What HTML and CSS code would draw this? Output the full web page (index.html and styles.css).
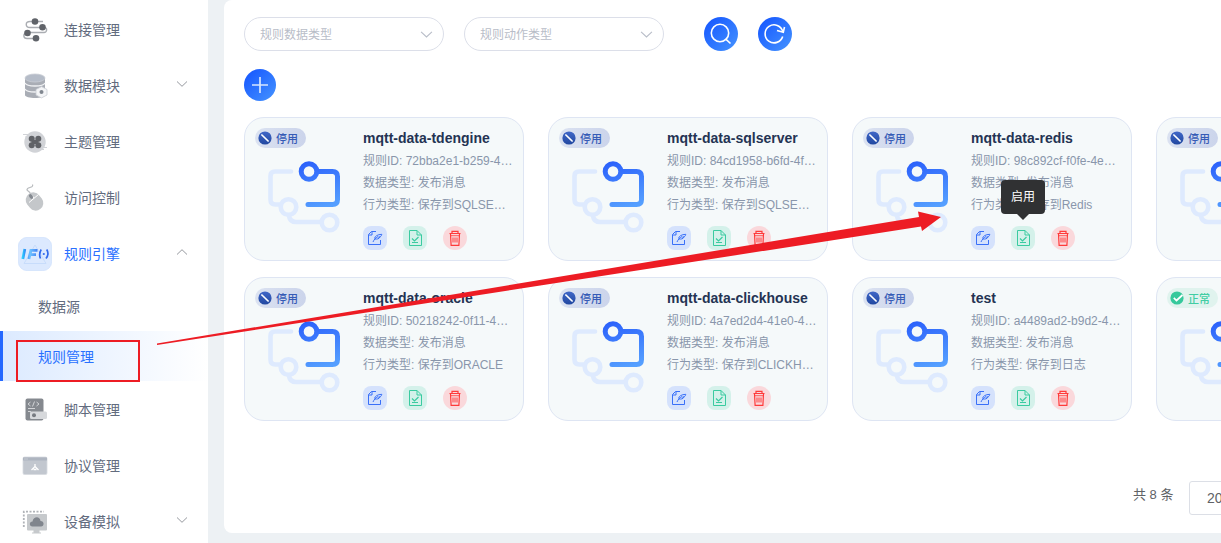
FILE: index.html
```html
<!DOCTYPE html>
<html lang="zh">
<head>
<meta charset="utf-8">
<title>规则管理</title>
<link rel="stylesheet" href="styles.css">
</head>
<body>
<svg class="defs" width="0" height="0" aria-hidden="true">
  <defs>
    <linearGradient id="gflow" gradientUnits="userSpaceOnUse" x1="40" y1="0" x2="55" y2="48"><stop offset="0" stop-color="#2a5ffb"/><stop offset="1" stop-color="#559fff"/></linearGradient>
    <linearGradient id="gnavy" x1="0" y1="0" x2="0" y2="1"><stop offset="0" stop-color="#4067c8"/><stop offset="1" stop-color="#2148a0"/></linearGradient>
    <linearGradient id="gif" gradientUnits="userSpaceOnUse" x1="4" y1="0" x2="20" y2="0"><stop offset="0" stop-color="#2fd8ff"/><stop offset=".25" stop-color="#2f7cf5"/><stop offset=".5" stop-color="#6fc4ff"/><stop offset="1" stop-color="#3d7cf5"/></linearGradient>
  </defs>
  <symbol id="flow" viewBox="0 0 74 74">
    <g fill="none" stroke="#deeafe" stroke-width="4.6" stroke-linecap="round" stroke-linejoin="round">
      <path d="M24 11.500H8Q3.500 11.500 3.500 16V39.500Q3.500 44.500 8.500 44.500H12"/>
      <circle cx="21.500" cy="47" r="7.800"/><path d="M22 56Q23 62 29 62H53"/><circle cx="62.500" cy="62.500" r="7.800"/>
    </g>
    <g fill="none" stroke="url(#gflow)" stroke-width="5" stroke-linecap="round" stroke-linejoin="round">
      <circle cx="42" cy="11.500" r="7.800"/><path d="M51 11.500H65.500Q70.500 11.500 70.500 16.500V39.500Q70.500 44.500 65.500 44.500H41"/>
    </g>
  </symbol>
  <symbol id="stop" viewBox="0 0 14 14"><circle cx="7" cy="7" r="6.600" fill="url(#gnavy)"/><path d="M3.900 4l6.200 6" stroke="#fff" stroke-width="1.700" stroke-linecap="round"/></symbol>
  <symbol id="ok" viewBox="0 0 14 14"><circle cx="7" cy="7" r="6.600" fill="#36c99c"/><path d="M3.800 6.900l2.700 2.600L12.500 4" stroke="#fff" stroke-width="1.700" fill="none"/></symbol>
  <symbol id="edit" viewBox="0 0 24 24"><g fill="none" stroke="#3970f8" stroke-width="1"><path d="M13 5.500H8.500L5.500 8.500V18.500H17.500V14M5.500 9H9V5.500"/><path d="M11.500 12.500C12 10 14.500 8.500 18.800 8.300C18.500 10 17.500 11 15.500 11.200H17C16 13 14 13.200 12 13M10 16C11 13.500 12.500 12 15 10.500"/></g></symbol>
  <symbol id="enable" viewBox="0 0 24 24"><g fill="none" stroke="#3acba0" stroke-width="1"><path d="M14 4.500H6.500V19.500H18.500V9L14 4.500V9H18.500M9 16.500H15"/><path d="M9 12.500l2.500 2.500L15.500 11" stroke-width="1.200"/></g></symbol>
  <symbol id="trash" viewBox="0 0 24 24"><g fill="none" stroke="#ff3a3a" stroke-width="1.200"><path d="M6.500 7.500H17.500M9 7V5.300H15V7M7.500 8L8.100 19.300H15.900L16.500 8"/><path d="M8 9.700H16" stroke-width=".8"/><path d="M10 11.500V16.500M12 11.500V16.500M14 11.500V16.500" stroke-width="1"/></g></symbol>
  <symbol id="chev" viewBox="0 0 12 8"><path d="M1 1.500L6 6.300L11 1.500" fill="none" stroke="currentColor" stroke-width="1"/></symbol>
</svg>

<aside class="sidebar">
  <nav class="menu">
    <a class="item"><svg class="icon" viewBox="0 0 34 34"><g fill="none" stroke="#aaadb2" stroke-width="1.400"><path d="M25 8.500H12C7 8.500 7 14.500 12 14.500H26M26 14.500C30 14.500 29 19.500 26 19.500H10M8 20C5 21 5 25.500 9 25.500H18"/></g><g fill="#606369"><circle cx="17" cy="8.500" r="3.300"/><circle cx="24.500" cy="14.300" r="3.300"/><circle cx="9.500" cy="20" r="3.300"/><circle cx="18" cy="25.200" r="3.300"/></g></svg><span>连接管理</span></a>
    <a class="item"><svg class="icon" viewBox="0 0 34 34"><path d="M7 9V26C7 30 27 30 27 26V9" fill="#a9adb5"/><path d="M7 14C9 18 25 18 27 14M7 20C9 24 25 24 27 20" fill="none" stroke="#f0f1f3" stroke-width="1.300"/><ellipse cx="17" cy="9" rx="10" ry="4" fill="#b5bcc8" stroke="#c9cdd4" stroke-width=".8"/><path d="M23.500 17.600L29 20.500V26L23.500 28.900L18 26V20.500Z" fill="#f4f5f7" stroke="#c9cdd3" stroke-width=".8"/><circle cx="23.500" cy="23" r="2" fill="#80868f"/></svg><span>数据模块</span><svg class="arrow"><use href="#chev"/></svg></a>
    <a class="item"><svg class="icon" viewBox="0 0 34 34"><circle cx="17" cy="17" r="10.700" fill="#d1d3d7"/><path d="M5 9.500H12M7 12H12M22 22.500H29M22 24.500H26" stroke="#d1d3d7" stroke-width="1.200"/><g fill="#606267"><circle cx="13.700" cy="13.700" r="3"/><circle cx="20.300" cy="13.700" r="3"/><circle cx="13.700" cy="20.300" r="3"/><circle cx="20.300" cy="20.300" r="3"/><path d="M13.500 15H20.500V19H13.500Z"/></g></svg><span>主题管理</span></a>
    <a class="item"><svg class="icon" viewBox="0 0 34 34"><path d="M14.500 3.500C16 7.500 8.500 5.500 9 9C9.500 10 12 10.500 12.500 13" fill="none" stroke="#b8bbbe" stroke-width="1.200"/><rect x="9" y="11" width="15" height="19" rx="7.300" fill="#c4c7ca" transform="rotate(-38 16.500 20.500)"/><path d="M11 21.500L20.500 13.500M12.500 13L16 17" stroke="#fff" stroke-width="1"/><ellipse cx="13" cy="15.500" rx="1.700" ry="2.600" fill="#858a91" transform="rotate(-38 13 15.500)"/></svg><span>访问控制</span></a>
    <a class="item current"><svg class="icon" viewBox="0 0 34 34"><rect x=".3" y=".3" width="33.400" height="33.400" rx="9" fill="#dce9fe" stroke="#c9defc" stroke-width=".6"/><path d="M17 8L28 26.500H6Z" fill="none" stroke="#c7dcfb"/><g fill="none" stroke="url(#gif)" stroke-width="2.800"><path d="M6.800 12L4.800 22"/><path d="M19.500 13.400H12.900L10.900 22M11.500 17.600H18"/></g><path d="M23.200 12.500Q20.500 17 22.500 21.500M28.700 12.500Q31.500 17 28 21.500" fill="none" stroke="#326bec" stroke-width="1.700"/><circle cx="25.800" cy="17" r="1.100" fill="#326bec"/></svg><span>规则引擎</span><svg class="arrow up"><use href="#chev"/></svg></a>
    <div class="submenu"><a class="sub">数据源</a><a class="sub selected">规则管理</a></div>
    <a class="item"><svg class="icon" viewBox="0 0 34 34"><rect x="7.500" y="5.500" width="18" height="22" rx="2" fill="#85898f"/><g fill="none" stroke="#d2d4d7" stroke-width="1"><path d="M12.500 9L10 11L12.500 13M18.500 9L21 11L18.500 13M16.500 8.500L14.500 13.500M10 15.500H17M10 18.500H13"/></g><rect x="12" y="18.500" width="17" height="7.500" rx="1.500" fill="#d7d9dc"/><circle cx="16" cy="22.200" r="2" fill="#777b81"/></svg><span>脚本管理</span></a>
    <a class="item"><svg class="icon" viewBox="0 0 34 34"><rect x="5" y="8" width="24" height="17.500" rx="1.500" fill="#c2c7cf" stroke="#d7dae0" stroke-width=".8"/><path d="M5 8.500H29V11.500H5Z" fill="#aeb5c0"/><path d="M6.500 10H10" stroke="#d9dde3" stroke-dasharray="1 1"/><path d="M17 15V17.500L13.500 21M17 17.500L20.500 21M15.500 20.500H18.500" fill="none" stroke="#fff" stroke-width="1.300"/></svg><span>协议管理</span></a>
    <a class="item"><svg class="icon" viewBox="0 0 34 34"><path d="M5.800 22V6.700H26" fill="none" stroke="#b0b3b8" stroke-width="1.800" stroke-dasharray="2 1.500"/><rect x="9" y="9" width="20" height="16.500" rx="1" fill="#c6c9cc"/><path d="M15.500 25H21.500V27.500H23V28.500H14V27.500H15.500Z" fill="#c6c9cc"/><path d="M14.500 21.500C11 21.500 11 16.500 14.500 16.500C15.500 11 22 11 22.500 16C26.500 16 26.500 21.500 23 21.500Z" fill="#80858d"/></svg><span>设备模拟</span><svg class="arrow"><use href="#chev"/></svg></a>
  </nav>
</aside>

<main class="panel">
  <div class="filters">
    <div class="select"><span>规则数据类型</span><svg><use href="#chev"/></svg></div>
    <div class="select"><span>规则动作类型</span><svg><use href="#chev"/></svg></div>
    <button class="round search"><svg viewBox="0 0 34 34"><g fill="none" stroke="#fff" stroke-width="1.600"><circle cx="16" cy="16" r="8.700"/><path d="M21.500 21.800L26.500 26.500"/></g></svg></button>
    <button class="round"><svg viewBox="0 0 34 34"><g fill="none" stroke="#fff" stroke-width="1.600"><path d="M24.700 19.500A9 9 0 1 1 24.800 14.500"/><path d="M19 13.500L25.300 15.300L26.500 10"/></g></svg></button>
  </div>
  <button class="round add"><svg viewBox="0 0 32 32"><path d="M8 16H24M16 8V24" stroke="#d6e6ff" stroke-width="1.700"/></svg></button>

  <section class="cards">
    <article class="card"><div class="visual"><span class="badge"><svg><use href="#stop"/></svg><span>停用</span></span><svg class="flow"><use href="#flow"/></svg></div><div class="info"><h3>mqtt-data-tdengine</h3><p>规则ID: 72bba2e1-b259-4…</p><p>数据类型: 发布消息</p><p>行为类型: 保存到SQLSE…</p><div class="actions"><svg class="edit"><use href="#edit"/></svg><svg class="enable"><use href="#enable"/></svg><svg class="trash"><use href="#trash"/></svg></div></div></article>
    <article class="card"><div class="visual"><span class="badge"><svg><use href="#stop"/></svg><span>停用</span></span><svg class="flow"><use href="#flow"/></svg></div><div class="info"><h3>mqtt-data-sqlserver</h3><p>规则ID: 84cd1958-b6fd-4f…</p><p>数据类型: 发布消息</p><p>行为类型: 保存到SQLSE…</p><div class="actions"><svg class="edit"><use href="#edit"/></svg><svg class="enable"><use href="#enable"/></svg><svg class="trash"><use href="#trash"/></svg></div></div></article>
    <article class="card"><div class="visual"><span class="badge"><svg><use href="#stop"/></svg><span>停用</span></span><svg class="flow"><use href="#flow"/></svg></div><div class="info"><h3>mqtt-data-redis</h3><p>规则ID: 98c892cf-f0fe-4e…</p><p>数据类型: 发布消息</p><p>行为类型: 保存到Redis</p><div class="actions"><svg class="edit"><use href="#edit"/></svg><span class="tip-anchor"><svg class="enable"><use href="#enable"/></svg><span class="tooltip">启用</span></span><svg class="trash"><use href="#trash"/></svg></div></div></article>
    <article class="card"><div class="visual"><span class="badge"><svg><use href="#stop"/></svg><span>停用</span></span><svg class="flow"><use href="#flow"/></svg></div></article>
    <article class="card"><div class="visual"><span class="badge"><svg><use href="#stop"/></svg><span>停用</span></span><svg class="flow"><use href="#flow"/></svg></div><div class="info"><h3>mqtt-data-oracle</h3><p>规则ID: 50218242-0f11-4…</p><p>数据类型: 发布消息</p><p>行为类型: 保存到ORACLE</p><div class="actions"><svg class="edit"><use href="#edit"/></svg><svg class="enable"><use href="#enable"/></svg><svg class="trash"><use href="#trash"/></svg></div></div></article>
    <article class="card"><div class="visual"><span class="badge"><svg><use href="#stop"/></svg><span>停用</span></span><svg class="flow"><use href="#flow"/></svg></div><div class="info"><h3>mqtt-data-clickhouse</h3><p>规则ID: 4a7ed2d4-41e0-4…</p><p>数据类型: 发布消息</p><p>行为类型: 保存到CLICKH…</p><div class="actions"><svg class="edit"><use href="#edit"/></svg><svg class="enable"><use href="#enable"/></svg><svg class="trash"><use href="#trash"/></svg></div></div></article>
    <article class="card"><div class="visual"><span class="badge"><svg><use href="#stop"/></svg><span>停用</span></span><svg class="flow"><use href="#flow"/></svg></div><div class="info"><h3>test</h3><p>规则ID: a4489ad2-b9d2-4…</p><p>数据类型: 发布消息</p><p>行为类型: 保存到日志</p><div class="actions"><svg class="edit"><use href="#edit"/></svg><svg class="enable"><use href="#enable"/></svg><svg class="trash"><use href="#trash"/></svg></div></div></article>
    <article class="card"><div class="visual"><span class="badge normal"><svg><use href="#ok"/></svg><span>正常</span></span><svg class="flow"><use href="#flow"/></svg></div></article>
  </section>

  <footer class="pager"><span class="total">共 8 条</span><span class="size">20</span></footer>
</main>

<svg class="marks" viewBox="0 0 1221 543" aria-hidden="true">
  <rect x="17" y="341" width="122" height="40" fill="none" stroke="#ed1c24" stroke-width="2"/>
  <path d="M157 343.500L919 217L918 211.500L941 217L922 231L921 226.500L157 345Z" fill="#ed1c24"/>
</svg>
</body>
</html>
```
FILE: styles.css
```css
* { box-sizing: border-box; }
body {
  margin: 0; width: 1221px; height: 543px; overflow: hidden;
  display: flex; gap: 16px; background: #edf1f4;
  font-family: "Liberation Sans", "Noto Sans CJK SC", sans-serif; font-size: 14px; color: #626b7e;
}
svg { display: block; }
.defs { position: absolute; }
.sidebar { flex: 0 0 208px; height: 543px; background: #fff; overflow: hidden; }
.menu { padding-top: 2px; }
.item { display: flex; align-items: center; height: 56px; padding: 0 20px 0 18px; }
.item span { padding-bottom: 2px; }
.icon { width: 34px; height: 34px; margin-right: 12px; }
.arrow { width: 12px; height: 8px; margin: 0 0 4px auto; color: #96999f; }
.arrow.up { transform: rotate(180deg); }
.current { color: #2970ff; }
.submenu { margin-top: -1px; padding-bottom: 1px; }
.sub { display: flex; align-items: center; height: 50px; padding-left: 38px; }
.selected {
  color: #2970ff; padding-left: 35px; border-left: 3px solid #2468ff;
  background: linear-gradient(90deg, #dceaff, #fff);
}
.panel {
  flex: 1; min-width: 0; height: 533px; padding: 17px 0 0 20px; overflow: hidden;
  background: #fff; border-radius: 8px 0 0 8px;
}
.filters { display: flex; height: 34px; }
.select {
  display: flex; align-items: center; justify-content: space-between;
  width: 200px; height: 34px; margin-right: 20px; padding: 0 10px 0 15px;
  border: 1px solid #dcdfe9; border-radius: 17px; font-size: 12px; color: #b8bdc8;
}
.select span { padding-bottom: 1px; }
.select svg { width: 13px; height: 9px; }
.round {
  display: block; width: 34px; height: 34px; padding: 0; border: 0; border-radius: 50%;
  background: linear-gradient(135deg, #1353ff, #4594ff);
}
.search { margin: 0 20px; }
.add { width: 32px; height: 32px; margin-top: 18px; }
.cards { display: grid; grid-template-columns: repeat(4, 280px); gap: 16px 24px; margin-top: 16px; }
.card {
  display: flex; height: 144px; padding: 10px;
  background: #f5f9fa; border: 1px solid #dee5f3; border-radius: 20px;
}
.visual { width: 108px; }
.badge {
  display: flex; align-items: center; gap: 4px; width: 51px; height: 20px; padding-left: 3px;
  border-radius: 10px; background: linear-gradient(90deg, #dbe2f1, #cbd4eb);
  font-size: 11px; font-weight: 500; color: #365bb6;
}
.badge span { padding-bottom: 1px; }
.badge svg { width: 14px; height: 14px; }
.normal { background: #e0f3ee; color: #41cda3; }
.flow { width: 74px; height: 74px; margin: 12px 0 0 12px; }
.info { flex: 1; white-space: nowrap; }
h3 { margin: 0; height: 22px; font-size: 14px; line-height: 20px; color: #243353; }
p { margin: 0; font-size: 12px; line-height: 22px; color: #8996ab; }
.actions { display: flex; gap: 16px; margin-top: 10px; }
.actions svg { width: 24px; height: 24px; border-radius: 8px; }
.actions .edit { background: #d5e2fc; }
.actions .enable { background: #d4f1ea; }
.actions .trash { background: #fad8db; border-radius: 12px; }
.tip-anchor { position: relative; }
.tooltip {
  position: absolute; left: -10px; bottom: 36px; width: 44px; height: 34px;
  border-radius: 4px; background: #303133; color: #fff; font-size: 12px; line-height: 34px; text-align: center;
}
.tooltip::after {
  content: ""; position: absolute; left: 16px; top: 34px;
  border: 6px solid transparent; border-top-color: #303133; border-bottom: 0;
}
.pager { display: flex; margin: 60px 0 0 889px; width: 200px; font-size: 13px; color: #606266; }
.total { width: 56px; line-height: 28px; }
.size { width: 90px; height: 34px; padding-left: 17px; border: 1px solid #dcdfe6; border-radius: 3px; line-height: 32px; font-size: 14px; }
.marks { position: absolute; left: 0; top: 0; width: 1221px; height: 543px; pointer-events: none; }
```
